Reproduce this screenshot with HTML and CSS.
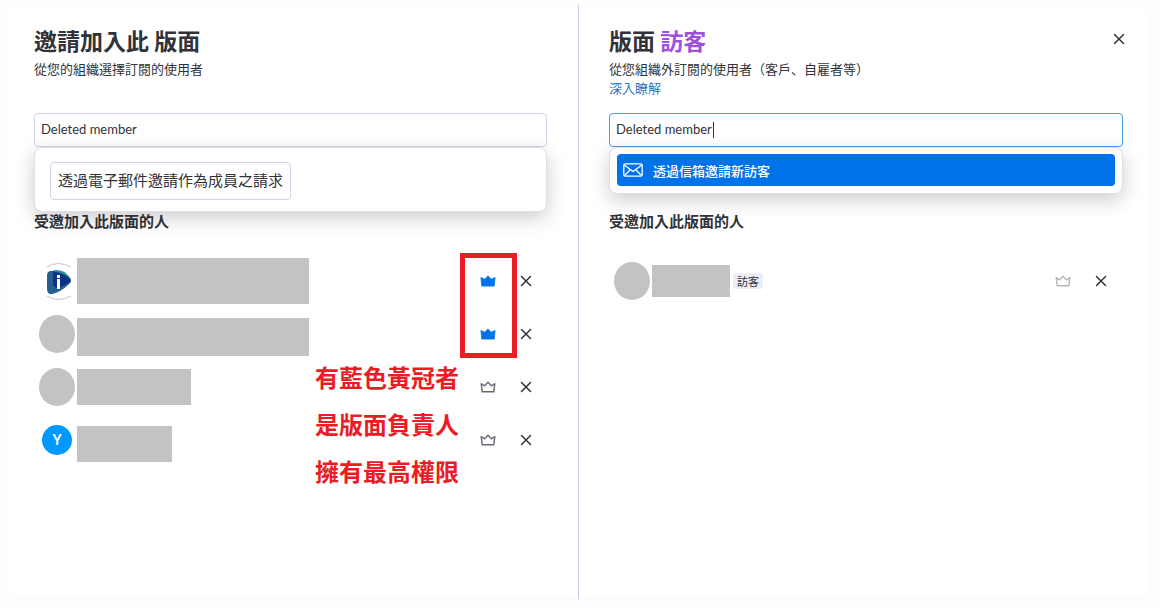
FILE: index.html
```html
<!DOCTYPE html>
<html lang="zh-Hant">
<head>
    <meta charset="UTF-8">
    <meta name="viewport" content="width=device-width, initial-scale=1">
    <title>邀請加入此版面</title>
    <link rel="stylesheet" href="styles.css">
</head>
<body>
    <svg class="sprite" aria-hidden="true">
        <symbol id="icon-close" viewBox="0 0 12 12">
            <path d="M1.5 1.5l9 9M10.5 1.5l-9 9" fill="none" stroke="currentColor" stroke-width="1.5" stroke-linecap="round"/>
        </symbol>
        <symbol id="icon-crown" viewBox="0 0 16 12">
            <path d="M1.2 2.7l1 8h11.6l1-8-3.5 2.2L8 1.2 4.7 4.9z" fill="none" stroke="currentColor" stroke-width="1.4" stroke-linejoin="round"/>
        </symbol>
        <symbol id="icon-crown-solid" viewBox="0 0 16 12">
            <path d="M.9 2.5l.9 8.6h12.4l.9-8.6-3.8 1.7L8 .9 4.7 4.2z" fill="currentColor" stroke="currentColor" stroke-width=".8" stroke-linejoin="round"/>
        </symbol>
    </svg>

    <main class="dialog">
        <section class="pane">
            <header class="pane-header">
                <h1>邀請加入此 版面</h1>
                <p>從您的組織選擇訂閱的使用者</p>
            </header>
            <div class="search">
                <input class="search-input" type="text" value="Deleted member" aria-label="搜尋成員">
                <div class="dropdown dropdown-request">
                    <button class="request-btn" type="button">透過電子郵件邀請作為成員之請求</button>
                </div>
            </div>
            <h2>受邀加入此版面的人</h2>
            <div class="people">
                <ul class="people-list">
                    <li class="person">
                        <svg class="avatar" viewBox="0 0 36 38" aria-hidden="true">
                            <path d="M8 5Q19-2 32 5M8 34Q19 41 32 34" fill="none" stroke="#c3c3c3" stroke-width="1"/>
                            <path d="M12 9Q21 7 30 15Q34 19 30 22Q22 30 13 32Q8 33 8 26V14Q8 9 12 9z" fill="#265f8f"/>
                            <path d="M15 9Q24 8 31 16Q33 19 30 21L20 26Q14 26 14 21V12z" fill="#0c3387"/>
                            <path d="M16 8Q27 7 32 18Q24 10 16 10z" fill="#2a928c"/>
                            <path d="M18 13h3v3h-3zM18 17h3v10h-3z" fill="#fff"/>
                        </svg>
                        <span class="mask mask-tall"></span>
                        <button class="icon-btn owner" type="button" aria-label="負責人"><svg class="crown"><use href="#icon-crown-solid"/></svg></button>
                        <button class="icon-btn" type="button" aria-label="移除"><svg class="cross"><use href="#icon-close"/></svg></button>
                    </li>
                    <li class="person">
                        <span class="avatar avatar-blank"></span>
                        <span class="mask mask-wide"></span>
                        <button class="icon-btn owner" type="button" aria-label="負責人"><svg class="crown"><use href="#icon-crown-solid"/></svg></button>
                        <button class="icon-btn" type="button" aria-label="移除"><svg class="cross"><use href="#icon-close"/></svg></button>
                    </li>
                    <li class="person">
                        <span class="avatar avatar-blank"></span>
                        <span class="mask mask-medium"></span>
                        <button class="icon-btn member" type="button" aria-label="設為負責人"><svg class="crown"><use href="#icon-crown"/></svg></button>
                        <button class="icon-btn" type="button" aria-label="移除"><svg class="cross"><use href="#icon-close"/></svg></button>
                    </li>
                    <li class="person">
                        <span class="avatar avatar-letter">Y</span>
                        <span class="mask mask-short"></span>
                        <button class="icon-btn member" type="button" aria-label="設為負責人"><svg class="crown"><use href="#icon-crown"/></svg></button>
                        <button class="icon-btn" type="button" aria-label="移除"><svg class="cross"><use href="#icon-close"/></svg></button>
                    </li>
                </ul>
                <div class="highlight-box"></div>
                <p class="note">有藍色黃冠者<br>是版面負責人<br>擁有最高權限</p>
            </div>
        </section>

        <section class="pane pane-guests">
            <button class="icon-btn close-btn" type="button" aria-label="關閉"><svg class="cross"><use href="#icon-close"/></svg></button>
            <header class="pane-header">
                <h1>版面 <span class="guest">訪客</span></h1>
                <p>從您組織外訂閱的使用者（客戶、自雇者等）</p>
                <a href="#">深入瞭解</a>
            </header>
            <div class="search">
                <input class="search-input active" type="text" value="Deleted member" aria-label="搜尋訪客">
                <span class="caret"></span>
                <div class="dropdown">
                    <button class="invite-btn" type="button">
                        <svg class="mail" viewBox="0 0 20 14" fill="none" stroke="currentColor" stroke-width="1.3" stroke-linecap="round" stroke-linejoin="round" aria-hidden="true">
                            <rect x=".8" y=".8" width="18.4" height="12.4" rx="1.5"/>
                            <path d="M1.5 2.3L10 8.6l8.5-6.3M1.8 12.2l4.7-4.7M18.2 12.2l-4.7-4.7"/>
                        </svg>
                        透過信箱邀請新訪客
                    </button>
                </div>
            </div>
            <h2>受邀加入此版面的人</h2>
            <ul class="people-list">
                <li class="person">
                    <span class="avatar avatar-blank"></span>
                    <span class="mask mask-guest"></span>
                    <span class="badge">訪客</span>
                    <button class="icon-btn muted" type="button" aria-label="設為負責人"><svg class="crown"><use href="#icon-crown"/></svg></button>
                    <button class="icon-btn" type="button" aria-label="移除"><svg class="cross"><use href="#icon-close"/></svg></button>
                </li>
            </ul>
        </section>
    </main>
</body>
</html>
```
FILE: styles.css
```css
* {
    box-sizing: border-box;
}
body {
    margin: 0;
    padding: 4px 9px 8px 5px;
    min-height: 100vh;
    display: flex;
    background: #fefefe;
    color: #323338;
    font-family: "Noto Sans CJK JP", sans-serif;
    font-feature-settings: "locl" 0;
    font-size: 13px;
}
button, input {
    font-family: inherit;
    font-feature-settings: inherit;
    color: inherit;
}
h1, h2, p, ul {
    margin: 0;
    padding: 0;
}
.sprite {
    position: absolute;
    width: 0;
    height: 0;
}
.dialog {
    flex: 1;
    display: grid;
    grid-template-columns: 1fr 1fr;
    border: 1px solid #fafafa;
    border-radius: 16px;
    background: #fff;
}
.pane {
    position: relative;
    padding: 20px 31px 20px 28px;
}
.pane-guests {
    padding: 20px 27px 20px 30px;
    border-left: 1px solid #c5c9e0;
}
.pane-header {
    min-height: 88px;
    line-height: 19px;
}
h1 {
    margin-bottom: 4px;
    font-size: 23px;
    line-height: 30px;
    font-weight: 700;
}
.guest {
    color: #9d50dd;
}
.pane-header a {
    display: block;
    color: #1f76c2;
    text-decoration: none;
}
.search {
    position: relative;
}
.search-input {
    display: block;
    width: 100%;
    height: 34px;
    padding: 0 6px 2px;
    border: 1px solid #d0d4e4;
    border-radius: 4px;
    background: #fff;
    font-family: Lato, "Noto Sans CJK JP", sans-serif;
    font-size: 13px;
    outline: none;
}
.search-input.active {
    border-color: #4a9af0;
}
.caret {
    position: absolute;
    top: 9px;
    left: 104px;
    width: 1px;
    height: 16px;
    background: #323338;
}
.dropdown {
    position: absolute;
    top: 100%;
    left: 0;
    right: 0;
    padding: 6px 7px 7px;
    border: 1px solid #dcdfec;
    border-radius: 8px;
    background: #fff;
    box-shadow: 0 6px 20px rgba(0,0,0,0.2);
}
.dropdown-request {
    padding: 14px 15px 11px;
}
.request-btn {
    display: block;
    height: 38px;
    padding: 0 7px 4px;
    border: 1px solid #d0d4e4;
    border-radius: 4px;
    background: #fff;
    font-size: 15px;
}
.invite-btn {
    display: flex;
    align-items: center;
    gap: 10px;
    width: 100%;
    height: 32px;
    padding: 0 6px;
    border: none;
    border-radius: 4px;
    background: #0073ea;
    color: #fff;
    font-size: 13px;
    font-weight: 500;
}
.mail {
    width: 20px;
    height: 14px;
}
h2 {
    margin: 62px 0 21px;
    font-size: 15px;
    line-height: 24px;
    font-weight: 700;
}
.people {
    position: relative;
}
.people-list {
    list-style: none;
}
.person {
    display: flex;
    align-items: center;
    height: 53px;
    padding: 0 9px 0 5px;
}
.avatar {
    flex: none;
    width: 36px;
    height: 38px;
    margin-right: 2px;
}
.avatar-blank {
    border-radius: 50%;
    background: #c3c3c3;
}
.avatar-letter {
    width: 30px;
    height: 30px;
    margin: 0 5px 0 3px;
    border-radius: 50%;
    background: #0099ff;
    color: #fff;
    font-family: Roboto, sans-serif;
    font-size: 15px;
    font-weight: 500;
    line-height: 30px;
    text-align: center;
}
.mask {
    background: #c3c3c3;
    height: 36px;
}
.mask-tall {
    width: 232px;
    height: 46px;
}
.mask-wide {
    align-self: flex-end;
    width: 232px;
    height: 38px;
    margin-bottom: 4px;
}
.mask-medium {
    width: 114px;
}
.mask-short {
    align-self: flex-end;
    width: 95px;
    margin-bottom: 4px;
}
.mask-guest {
    width: 78px;
    height: 32px;
}
.badge {
    margin-left: 3px;
    padding: 0 4px;
    border-radius: 3px;
    background: #ecedf5;
    font-size: 11px;
    line-height: 16px;
}
.icon-btn {
    display: flex;
    align-items: center;
    justify-content: center;
    width: 24px;
    height: 24px;
    padding: 0;
    border: none;
    background: none;
    cursor: pointer;
}
.owner, .member, .muted {
    margin: 0 14px 0 auto;
}
.owner {
    color: #0073ea;
}
.member {
    color: #676879;
}
.muted {
    color: #b4b5bb;
}
.crown {
    width: 16px;
    height: 12px;
}
.cross {
    width: 12px;
    height: 12px;
}
.pane-guests .person {
    padding-right: 10px;
}
.close-btn {
    position: absolute;
    top: 22px;
    right: 19px;
}
/* annotations over the member list */
.highlight-box {
    position: absolute;
    top: -1px;
    right: 30px;
    width: 57px;
    height: 105px;
    border: 5px solid #ed1c24;
    pointer-events: none;
}
.note {
    position: absolute;
    top: 99px;
    right: 88px;
    color: #ed1c24;
    font-size: 24px;
    font-weight: 700;
    line-height: 47px;
    white-space: nowrap;
}
```
